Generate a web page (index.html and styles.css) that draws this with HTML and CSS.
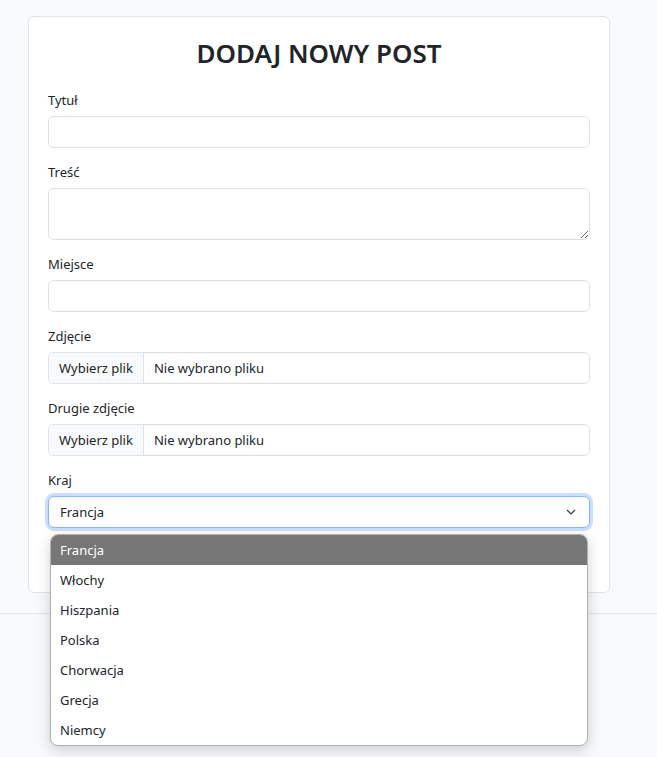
FILE: index.html
```html
<!DOCTYPE html>
<html lang="pl">
<head>
<meta charset="utf-8">
<title>Dodaj nowy post</title>
<link rel="stylesheet" href="styles.css">
</head>
<body>
<main class="page">
  <form class="card">
    <h1 class="title">DODAJ NOWY POST</h1>
    <div class="group">
      <label class="label">Tytuł</label>
      <input class="control" type="text">
    </div>
    <div class="group">
      <label class="label">Treść</label>
      <textarea class="control area"></textarea>
    </div>
    <div class="group">
      <label class="label">Miejsce</label>
      <input class="control" type="text">
    </div>
    <div class="group">
      <label class="label">Zdjęcie</label>
      <div class="control file"><span class="file-btn">Wybierz plik</span><span class="file-name">Nie wybrano pliku</span></div>
    </div>
    <div class="group">
      <label class="label">Drugie zdjęcie</label>
      <div class="control file"><span class="file-btn">Wybierz plik</span><span class="file-name">Nie wybrano pliku</span></div>
    </div>
    <div class="group select-group">
      <label class="label">Kraj</label>
      <div class="control select">
        <span>Francja</span>
        <svg class="chev" width="12" height="12" viewBox="0 0 12 12"><path d="M2 4 L6 8 L10 4" fill="none" stroke="#343a40" stroke-width="1.2"/></svg>
      </div>
      <ul class="dropdown">
        <li class="opt active">Francja</li>
        <li class="opt">Włochy</li>
        <li class="opt">Hiszpania</li>
        <li class="opt">Polska</li>
        <li class="opt">Chorwacja</li>
        <li class="opt">Grecja</li>
        <li class="opt">Niemcy</li>
      </ul>
    </div>
  </form>
</main>
<footer class="footer"></footer>
</body>
</html>
```

FILE: styles.css
```css
* { box-sizing: border-box; }
html, body { margin: 0; padding: 0; }
body {
  background: #f7fafb;
  font-family: "Noto Sans", "Open Sans", sans-serif;
  color: #212529;
  font-size: 13px;
  min-height: 757px;
}
.page {
  padding: 16px 47px 20px 28px;
}
.card {
  background: #fff;
  border: 1px solid #dfe3e7;
  border-radius: 6px;
  padding: 19px 19px 64px 19px;
  display: flex;
  flex-direction: column;
}
.title {
  margin: 0 0 22px;
  text-align: center;
  font-size: 26px;
  font-weight: 600;
  line-height: 34px;
  color: #212529;
}
.group {
  display: flex;
  flex-direction: column;
  margin-bottom: 16px;
}
.label {
  height: 20px;
  line-height: 17px;
  margin-bottom: 4px;
  font-size: 13px;
}
.control {
  height: 32px;
  width: 100%;
  border: 1px solid #dee2e6;
  border-radius: 6px;
  background: #fff;
  font: inherit;
  padding: 0 11px;
  margin: 0;
}
.area {
  height: 52px;
  resize: vertical;
  display: block;
}
.file {
  display: flex;
  align-items: stretch;
  padding: 0;
  overflow: hidden;
}
.file-btn {
  background: #f8f9fa;
  border-right: 1px solid #dee2e6;
  padding: 0 10px;
  display: flex;
  align-items: center;
}
.file-name {
  padding: 0 10px;
  display: flex;
  align-items: center;
}
.select-group {
  position: relative;
  margin-bottom: 0;
}
.select {
  display: flex;
  align-items: center;
  justify-content: space-between;
  border-color: #86b7fe;
  box-shadow: 0 0 0 3px rgba(13, 110, 253, 0.22);
  padding-right: 12px;
}
.chev { display: block; }
.dropdown {
  position: absolute;
  left: 2px;
  right: 2px;
  top: 62px;
  margin: 0;
  padding: 0;
  list-style: none;
  background: #fff;
  border: 1px solid #b0b0b0;
  border-radius: 8px;
  overflow: hidden;
  box-shadow: 0 4px 14px rgba(0, 0, 0, 0.18);
  z-index: 5;
}
.opt {
  height: 30px;
  line-height: 30px;
  padding: 0 9px;
  font-size: 13px;
}
.opt.active {
  background: #777;
  color: #fff;
}
.footer {
  border-top: 1px solid #e3e6e9;
  height: 140px;
}
```
